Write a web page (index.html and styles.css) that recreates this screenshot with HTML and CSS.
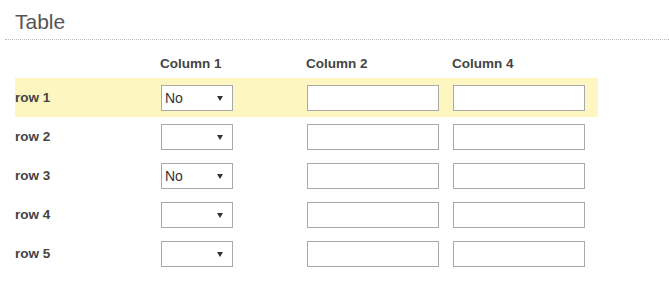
FILE: index.html
```html
<!DOCTYPE html>
<html lang="en">
<head>
    <meta charset="UTF-8">
    <title>Table</title>
    <link rel="stylesheet" href="styles.css">
</head>
<body>
    <div class="panel">
        <h2 class="panel-title">Table</h2>

        <table class="grid">
            <thead>
                <tr>
                    <th class="label-col"></th>
                    <th>Column 1</th>
                    <th>Column 2</th>
                    <th>Column 4</th>
                </tr>
            </thead>
            <tbody>
                <tr class="active">
                    <td class="row-label">row 1</td>
                    <td><span class="pick"><select><option>No</option><option>Yes</option></select></span></td>
                    <td><input type="text"></td>
                    <td><input type="text"></td>
                </tr>
                <tr>
                    <td class="row-label">row 2</td>
                    <td><span class="pick"><select><option></option><option>No</option><option>Yes</option></select></span></td>
                    <td><input type="text"></td>
                    <td><input type="text"></td>
                </tr>
                <tr>
                    <td class="row-label">row 3</td>
                    <td><span class="pick"><select><option>No</option><option>Yes</option></select></span></td>
                    <td><input type="text"></td>
                    <td><input type="text"></td>
                </tr>
                <tr>
                    <td class="row-label">row 4</td>
                    <td><span class="pick"><select><option></option><option>No</option><option>Yes</option></select></span></td>
                    <td><input type="text"></td>
                    <td><input type="text"></td>
                </tr>
                <tr>
                    <td class="row-label">row 5</td>
                    <td><span class="pick"><select><option></option><option>No</option><option>Yes</option></select></span></td>
                    <td><input type="text"></td>
                    <td><input type="text"></td>
                </tr>
            </tbody>
        </table>
    </div>
</body>
</html>
```

FILE: styles.css
```css
body {
    margin: 0;
    font-family: "Liberation Sans", Arial, sans-serif;
    background: #fff;
    color: #444;
}
.panel {
    padding: 9px 0 0 5px;
}
.panel-title {
    margin: 0;
    padding: 0 0 5px 10px;
    font-size: 21px;
    font-weight: normal;
    color: #555;
    line-height: 25px;
    border-bottom: 1px dotted #bbb;
}
.grid {
    border-collapse: collapse;
    margin: 10px 0 0 10px;
}
.grid th {
    text-align: left;
    font-size: 13.5px;
    font-weight: bold;
    color: #444;
    height: 26px;
    padding: 0 0 2px 0;
    width: 146px;
    vertical-align: middle;
}
.grid th.label-col {
    width: 145px;
}
.grid td {
    height: 39px;
    padding: 0;
    vertical-align: middle;
}
.grid tr.active td {
    background: #fdf6c0;
}
.row-label {
    font-size: 13.5px;
    font-weight: bold;
    color: #444;
    padding-bottom: 5px;
}
.pick {
    position: relative;
    display: inline-block;
    margin-left: 1px;
    vertical-align: middle;
}
.pick select {
    appearance: none;
    -webkit-appearance: none;
    width: 72px;
    height: 26px;
    border: 1px solid #a9a9a9;
    border-radius: 0;
    background: #fff;
    font-family: "Liberation Sans", Arial, sans-serif;
    font-size: 14px;
    color: #333;
    padding: 0 0 0 3px;
    margin: 0;
    display: block;
}
.pick::after {
    content: "";
    position: absolute;
    right: 10px;
    top: 11px;
    border-left: 3px solid transparent;
    border-right: 3px solid transparent;
    border-top: 5px solid #333;
    pointer-events: none;
}
.grid input {
    width: 132px;
    height: 26px;
    box-sizing: border-box;
    border: 1px solid #a9a9a9;
    border-radius: 0;
    margin: 0 0 0 1px;
    padding: 0 4px;
    display: block;
    background: #fff;
}
```
